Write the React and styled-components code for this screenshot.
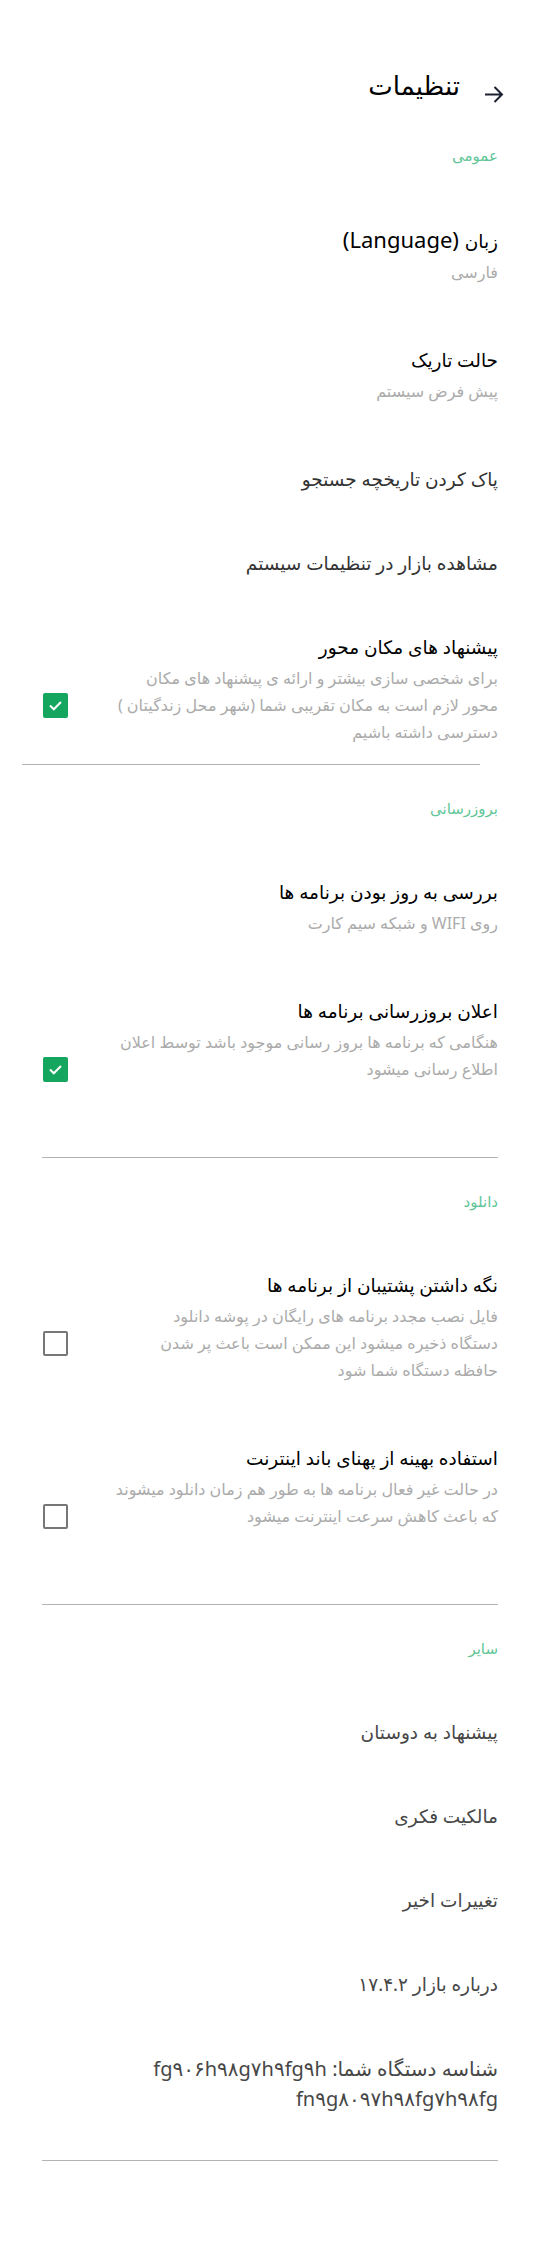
import styled, { createGlobalStyle } from 'styled-components';

const GlobalStyle = createGlobalStyle`
	body {
		margin: 0;
		background: #fff;
		font-family: "Noto Sans", "DejaVu Sans", sans-serif;
	}
`;

// desc lines are kept as they wrap in the app
const SECTIONS = [
	{
		title: 'عمومی',
		shiftDivider: true,
		pb: 0,
		items: [
			{ title: 'زبان', latin: '(Language)', sub: 'فارسی' },
			{ title: 'حالت تاریک', sub: 'پیش فرض سیستم' },
			{ title: 'پاک کردن تاریخچه جستجو', tone: 'dim' },
			{ title: 'مشاهده بازار در تنظیمات سیستم', tone: 'dim' },
			{
				title: 'پیشنهاد های مکان محور',
				desc: [
					'برای شخصی سازی بیشتر و ارائه ی پیشنهاد های مکان',
					'محور لازم است به مکان تقریبی شما (شهر محل زندگیتان )',
					'دسترسی داشته باشیم',
				],
				checked: true,
				pb: 14,
			},
		],
	},
	{
		title: 'بروزرسانی',
		pb: 15,
		items: [
			{ title: 'بررسی به روز بودن برنامه ها', sub: 'روی WIFI و شبکه سیم کارت' },
			{
				title: 'اعلان بروزرسانی برنامه ها',
				desc: [
					'هنگامی که برنامه ها بروز رسانی موجود باشد توسط اعلان',
					'اطلاع رسانی میشود',
				],
				checked: true,
			},
		],
	},
	{
		title: 'دانلود',
		pb: 15,
		items: [
			{
				title: 'نگه داشتن پشتیبان از برنامه ها',
				desc: [
					'فایل نصب مجدد برنامه های رایگان در پوشه دانلود',
					'دستگاه ذخیره میشود این ممکن است باعث پر شدن',
					'حافظه دستگاه شما شود',
				],
				checked: false,
			},
			{
				title: 'استفاده بهینه از پهنای باند اینترنت',
				desc: [
					'در حالت غیر فعال برنامه ها به طور هم زمان دانلود میشوند',
					'که باعث کاهش سرعت اینترنت میشود',
				],
				checked: false,
			},
		],
	},
	{
		title: 'سایر',
		pb: 18,
		items: [
			{ title: 'پیشنهاد به دوستان', tone: 'muted' },
			{ title: 'مالکیت فکری', tone: 'muted' },
			{ title: 'تغییرات اخیر', tone: 'muted' },
			{ title: 'درباره بازار ۱۷.۴.۲', tone: 'muted' },
			{
				title: 'شناسه دستگاه شما: fg۹۰۶h۹۸g۷h۹fg۹h fn۹g۸۰۹۷h۹۸fg۷h۹۸fg',
				tone: 'muted',
				tall: true,
			},
		],
	},
];

const TONES = { strong: '#000', dim: '#333', muted: '#474747' };

function CheckBox({ checked }) {
	return (
		<StCheck $checked={checked}>
			{checked && (
				<svg width="25" height="25" viewBox="0 0 25 25">
					<path d="M7 12.5l3.8 3.8L18 9" fill="none" stroke="#fff" strokeWidth="2" />
				</svg>
			)}
		</StCheck>
	);
}

function SettingItem({ item }) {
	return (
		<StItem $pb={item.pb}>
			<StTitle $tone={item.tone} $tall={item.tall}>
				{item.title}
				{item.latin && <StLatin> {item.latin}</StLatin>}
			</StTitle>
			{item.sub && <StSub>{item.sub}</StSub>}
			{item.desc && (
				<StDescRow>
					<StDesc>
						{item.desc.map((line) => (
							<StLine key={line}>{line}</StLine>
						))}
					</StDesc>
					<CheckBox checked={item.checked} />
				</StDescRow>
			)}
		</StItem>
	);
}

function App() {
	return (
		<>
			<GlobalStyle />
			<StPage>
				<StHeader>
					<StBack>
						<svg width="20" height="19" viewBox="0 0 20 19">
							<path
								d="M1 9.5h17M10.5 2l7.5 7.5-7.5 7.5"
								fill="none"
								stroke="#1b2130"
								strokeWidth="2"
							/>
						</svg>
					</StBack>
					<StPageTitle>تنظیمات</StPageTitle>
				</StHeader>
				{SECTIONS.map((section) => (
					<StSection key={section.title} $pb={section.pb}>
						<StSectionTitle>{section.title}</StSectionTitle>
						{section.items.map((item) => (
							<SettingItem key={item.title} item={item} />
						))}
						<StDivider $shift={section.shiftDivider} />
					</StSection>
				))}
			</StPage>
		</>
	);
}

const StPage = styled.div`
	direction: rtl;
	min-height: 2247px;
	padding: 65px 45px 0 42px;
	box-sizing: border-box;
`;

const StHeader = styled.div`
	display: flex;
	align-items: center;
	gap: 24px;
	margin-right: -6px;
	margin-bottom: 39px;
`;

const StBack = styled.div`
	display: flex;
	margin-top: 20px;
`;

const StPageTitle = styled.h1`
	margin: 0;
	font-size: 26px;
	line-height: 36px;
	font-weight: 400;
	color: #000;
`;

const StSection = styled.section`
	display: flex;
	flex-direction: column;
	& > hr {
		margin-top: ${(p) => p.$pb}px;
	}
`;

const StSectionTitle = styled.div`
	font-size: 15px;
	line-height: 24px;
	color: #5fc597;
	margin-bottom: 30px;
`;

const StItem = styled.div`
	padding: 28px 0 ${(p) => p.$pb ?? 28}px;
`;

const StTitle = styled.div`
	font-size: ${(p) => (p.$tall ? 20 : 18.5)}px;
	line-height: ${(p) => (p.$tall ? 30 : 28)}px;
	color: ${(p) => TONES[p.$tone || 'strong']};
`;

const StLatin = styled.span`
	font-size: 22px;
`;

const StSub = styled.div`
	margin: 4px 0;
	font-size: 16px;
	line-height: 27px;
	color: #ababab;
`;

const StDescRow = styled.div`
	display: flex;
	align-items: center;
	gap: 24px;
	margin: 4px 0;
`;

const StDesc = styled.div`
	flex: 1;
	min-height: 81px;
	font-size: 16px;
	line-height: 27px;
	color: #ababab;
`;

const StLine = styled.span`
	display: block;
	white-space: nowrap;
`;

const StCheck = styled.div`
	flex: none;
	width: 25px;
	height: 25px;
	margin-left: 1px;
	box-sizing: border-box;
	border-radius: 2px;
	background: ${(p) => (p.$checked ? '#14a65e' : '#fff')};
	border: ${(p) => (p.$checked ? 'none' : '2px solid #777')};
`;

const StDivider = styled.hr`
	border: none;
	height: 1px;
	background: #b3b3b3;
	margin: 0 ${(p) => (p.$shift ? '18px' : '0')} 31px ${(p) => (p.$shift ? '-20px' : '0')};
`;

export default App;
